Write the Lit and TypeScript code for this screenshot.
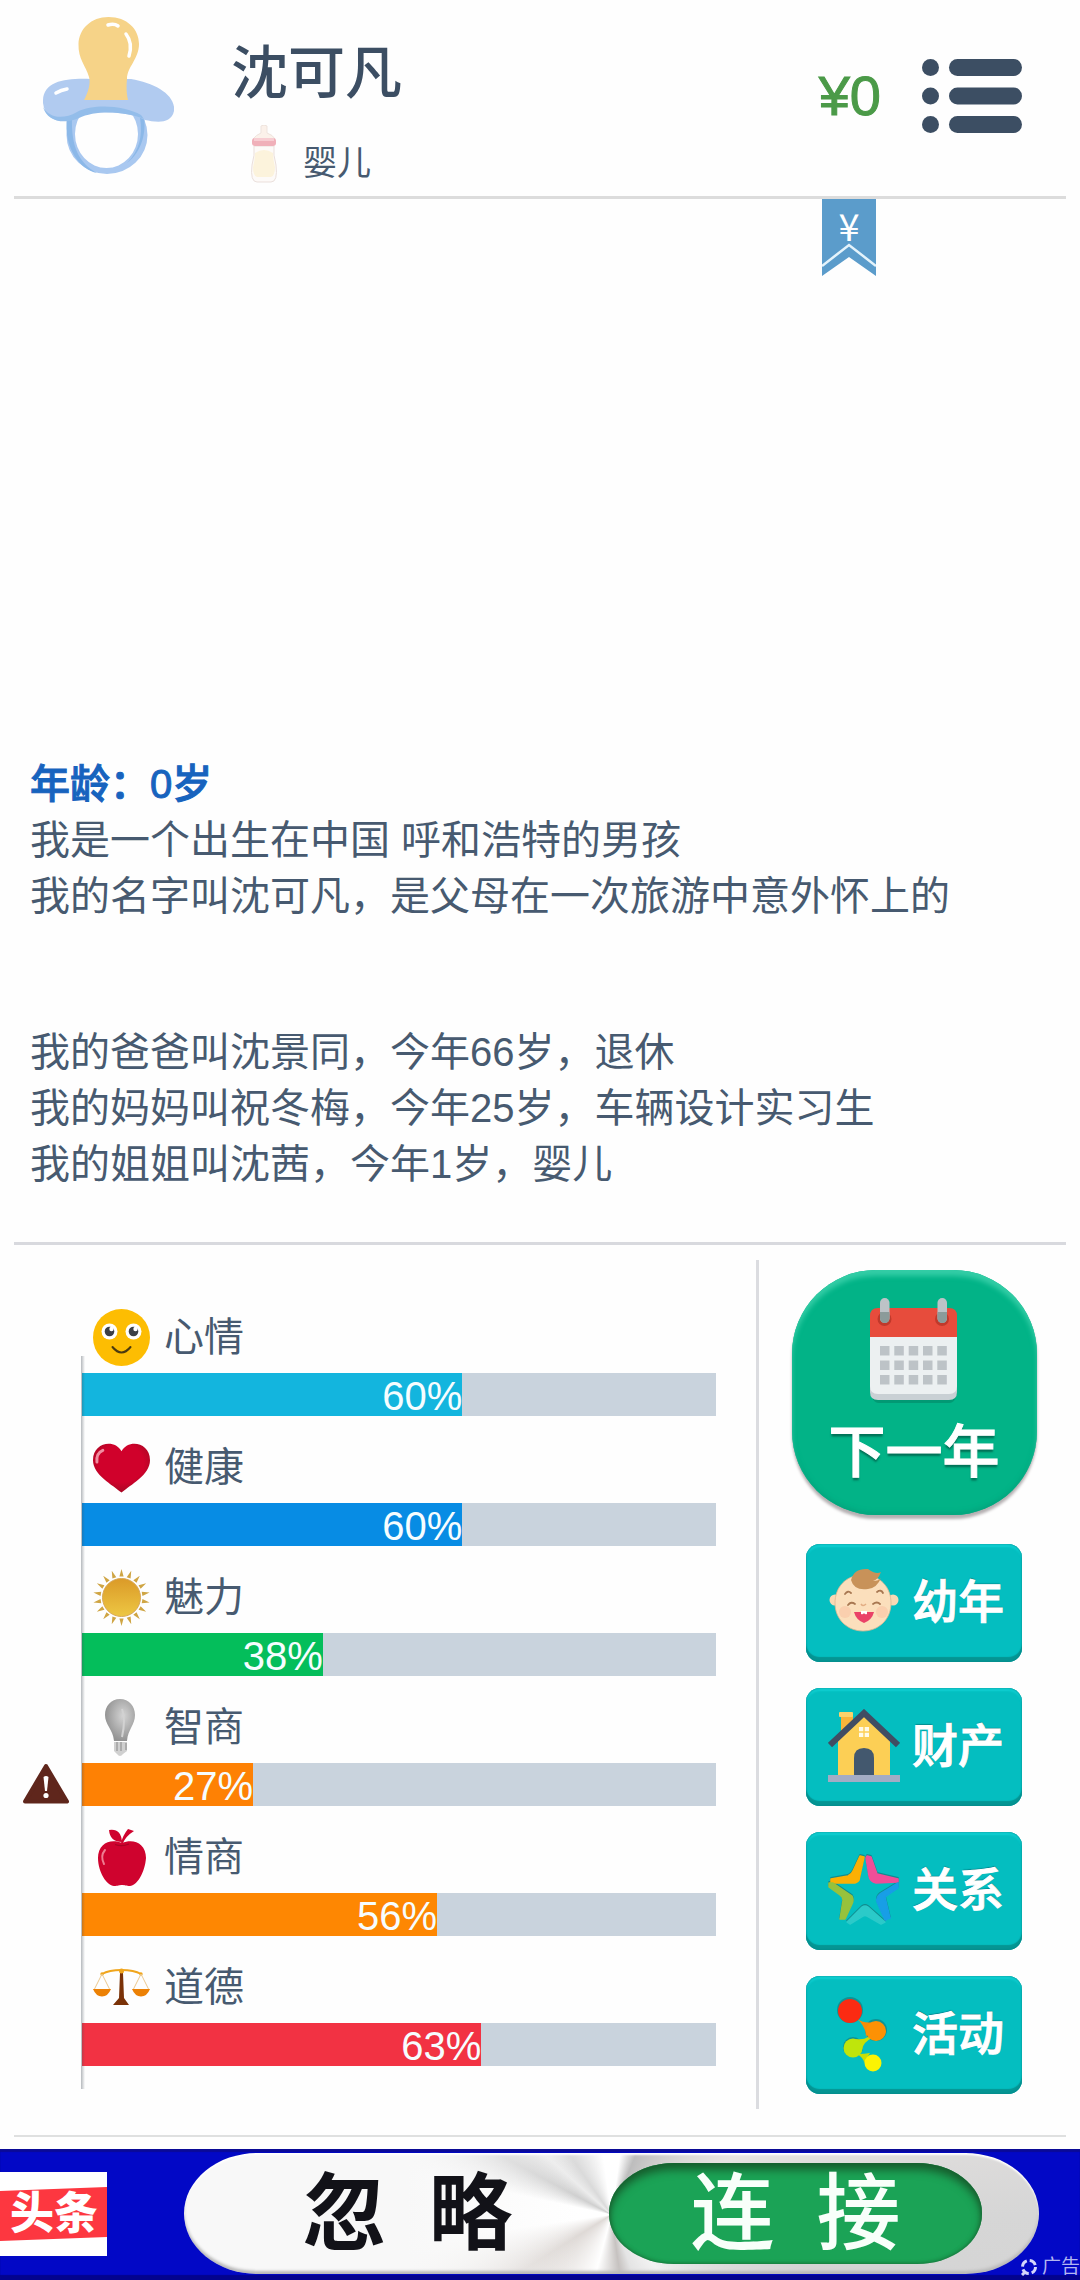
import { LitElement, html, svg, css, TemplateResult } from "lit";
import { customElement, property } from "lit/decorators.js";
import { styleMap } from "lit/directives/style-map.js";

/* ---------- icons ---------- */

const pacifier = html`<svg width="131" height="158" viewBox="0 0 131 158" role="img" aria-label="头像">
  <path fill="#a9c8f0" fill-rule="evenodd" d="M23.500 118A40.500 39 0 0 0 104.500 118A40.500 39 0 0 0 23.500 118ZM32 117A31.500 34 0 0 1 95 117A31.500 34 0 0 1 32 117Z"/>
  <path fill="#8bb8e8" d="M24 100C20 132 38 153 54 156C36 146 28 130 29 100ZM97 100C100 120 96 134 84 146C100 134 103 114 101 100Z"/>
  <path fill="#b1cbf0" d="M0 86C-1 64 22 61 48 62H88C112 66 133 78 131 94C128 108 112 105 102 103C86 94 48 92 34 101C18 108 2 103 0 86Z"/>
  <path fill="#93bdea" d="M0 90C4 104 20 108 36 101C52 93 82 94 101 102L98 98C82 89 52 86 34 95C20 103 6 101 0 90Z"/>
  <path fill="#f6d388" d="M65.500 0C84 0 96 12 96 27C96 42 84 50 84 62C83 72 84 78 85 83H41C45 76 48 66 46 60C43 49 35 42 35.500 27C36 12 48 0 65.500 0Z"/>
  <path fill="none" stroke="#fff" stroke-linecap="round" stroke-width="3.500" d="M65 8Q71 6 75 9M83 17Q90 26 86 39M13 76Q18 73 24 72"/>
</svg>`;

const bottle = html`<svg width="26" height="58" viewBox="0 0 26 58" aria-hidden="true">
  <path fill="#fbf1ea" stroke="#eee3dd" d="M10 1Q13-1 16 1V8Q22 10 24 14H2Q5 10 10 8Z"/>
  <path fill="#fdfaf8" stroke="#eadfdb" d="M3 21H23Q22 30 25 40Q27 57 20 57H6Q-1 57 1 40Q4 30 3 21Z"/>
  <path fill="#fcf3dc" d="M4 28Q13 22 22 28Q22 34 24 42Q24 51 20 52H6Q2 51 2 42Q4 34 4 28Z"/>
  <rect fill="#f0b0b9" x="1" y="13" width="24" height="8" rx="3"/>
  <path fill="#f7cdd2" d="M3 13H23V16H3Z"/>
</svg>`;

const menuIcon = html`<svg width="100" height="76" viewBox="0 0 100 76" aria-hidden="true" fill="#3c4e63">
  ${[9.5, 38, 66.5].map((y) => svg`<circle cx="8.5" cy=${y} r="8.5"/><rect x="27" y=${y - 8.5} width="73" height="17" rx="8.500"/>`)}
</svg>`;

const ribbon = html`<svg width="54" height="77" viewBox="0 0 54 77" aria-hidden="true">
  <path fill="#5b9ccb" d="M0 0H54V77L27 58L0 77Z"/>
  <path fill="none" stroke="#e4f3fb" stroke-width="2.500" d="M0 67L27 46L54 67"/>
</svg>`;

const smile = html`<svg width="57" height="57" viewBox="0 0 57 57" aria-hidden="true">
  <circle cx="28.500" cy="28.500" r="28.500" fill="#fdbd02"/>
  <circle cx="16.500" cy="22.500" r="8" fill="#fff"/><circle cx="40.500" cy="22.500" r="8" fill="#fff"/>
  <circle cx="16.500" cy="22.500" r="4.800" fill="#3b3f46"/><circle cx="40.500" cy="22.500" r="4.800" fill="#3b3f46"/>
  <circle cx="18.500" cy="20" r="2.200" fill="#fff"/><circle cx="42.500" cy="20" r="2.200" fill="#fff"/>
  <path d="M19.500 38Q28.500 49 37.500 38" fill="none" stroke="#4a3a10" stroke-width="2" stroke-linecap="round"/>
</svg>`;

const heart = html`<svg width="58" height="57" viewBox="0 0 58 57" aria-hidden="true">
  <defs><radialGradient id="h" cx=".5" cy=".4" r=".65"><stop offset=".6" stop-color="#d0012b"/><stop offset="1" stop-color="#9c0a22"/></radialGradient></defs>
  <path fill="url(#h)" d="M29 54C20 46 0 36 0 21C0 3 22-1 29 12C36-1 58 3 58 21C58 36 38 46 29 54Z"/>
  <path fill="none" stroke="#f08da0" stroke-width="3" stroke-linecap="round" d="M4 23Q3 14 10 11"/>
</svg>`;

const rays = Array.from({ length: 18 }, (_, i) => {
  const a = (i * Math.PI) / 9;
  const at = (r: number, d: number) => `${28.5 + r * Math.sin(a + d)} ${28.5 - r * Math.cos(a + d)}`;
  return `M${at(21, -0.1)}L${at(28.5, 0)}L${at(21, 0.1)}Z`;
}).join("");

const sun = html`<svg width="57" height="57" viewBox="0 0 57 57" aria-hidden="true">
  <defs><linearGradient id="s" x2="0" y2="1"><stop stop-color="#db9a28"/><stop offset="1" stop-color="#edc743"/></linearGradient></defs>
  <path d=${rays} fill="#cfa544"/>
  <circle cx="28.500" cy="28.500" r="19" fill="url(#s)" stroke="#d8a857"/>
</svg>`;

const bulb = html`<svg width="57" height="57" viewBox="0 0 57 57" aria-hidden="true">
  <defs><radialGradient id="b" cx=".6" cy=".4" r=".6"><stop stop-color="#d4d4d4"/><stop offset=".6" stop-color="#adadad"/><stop offset="1" stop-color="#939393"/></radialGradient></defs>
  <path fill="url(#b)" d="M27 0C36 0 42 7 42 16C42 26 35 30 34 42H21C20 30 12 26 12 16C12 7 18 0 27 0Z"/>
  <path fill="#d0d0d0" d="M21 43H34V52L30 55Q27 59 24 55L21 52Z"/>
  <path fill="none" stroke="#a0a0a0" stroke-width="1.500" d="M24 43V52M28 43V52M33 44V51"/>
  <path fill="none" stroke="#d2d2d2" stroke-width="2" d="M29 10Q33 20 29 38"/>
</svg>`;

const apple = html`<svg width="57" height="57" viewBox="0 0 57 57" aria-hidden="true">
  <path fill="#cf032e" d="M29 14C40 9 53 14 53 29C52 43 44 57 37 57C33 57 32 56 29 56C26 56 25 57 21 57C14 57 5 43 5 29C5 14 18 9 29 14Z"/>
  <path fill="#cf032e" d="M29 13Q17 13 16 1Q28-1 29 13ZM28 14Q30 6 35 0L41 2Q33 7 30 14Z"/>
  <path fill="none" stroke="#a80324" stroke-width="1.200" d="M22 15.500Q29 18 36 15"/>
  <path fill="none" stroke="#ee7d92" stroke-width="2" stroke-linecap="round" d="M11 35Q7 27 12 21"/>
</svg>`;

const scales = html`<svg width="57" height="57" viewBox="0 0 57 57" aria-hidden="true">
  <path fill="#7a3208" d="M27 14H30L31 39L36 46H20L26 39Z"/>
  <path fill="none" stroke="#f0a51c" stroke-width="2" stroke-linecap="round" d="M9 15Q16 11 28.500 11Q41 11 48 15"/>
  <circle cx="28.500" cy="12" r="2.500" fill="#f0a51c"/><circle cx="9" cy="15" r="1.700" fill="#f0a51c"/><circle cx="48" cy="15" r="1.700" fill="#f0a51c"/>
  <path fill="none" stroke="#ecc98e" d="M9 15L1 31M9 15L17 31M48 15L40 31M48 15L56 31"/>
  <path fill="#ec8105" d="M0 30H18Q15 37.500 9 37.500T0 30ZM39 30H57Q54 37.500 48 37.500T39 30Z"/>
</svg>`;

const warning = html`<svg width="46" height="42" viewBox="0 0 46 42" role="img" aria-label="警告">
  <path fill="#5f261c" stroke="#5f261c" stroke-width="4" stroke-linejoin="round" d="M23 3L44 38.500H2Z"/>
  <path fill="#fff" d="M20.500 14Q23 12 25.500 14L24 28H22Z"/><circle cx="23" cy="32.500" r="2.600" fill="#fff"/>
</svg>`;

const calendar = html`<svg width="88" height="106" viewBox="0 0 88 106" aria-hidden="true">
  <path fill="#017f61" opacity=".5" d="M1 90H87Q87 105 79 105H9Q1 105 1 90Z"/>
  <path fill="#c9d0d4" d="M0 50H87V94Q87 102 79 102H8Q0 102 0 94Z"/>
  <path fill="#ecf0f1" d="M0 38H87V88Q87 96 79 96H8Q0 96 0 88Z"/>
  <path fill="#e74c3c" d="M8 10H79Q87 10 87 18V39H0V18Q0 10 8 10Z"/>
  <circle cx="14.500" cy="21" r="7" fill="#c0392b"/><circle cx="72" cy="21" r="7" fill="#c0392b"/>
  <rect x="10" y="0" width="9.500" height="25" rx="4.700" fill="#bdc3c7"/><rect x="67.500" y="0" width="9.500" height="25" rx="4.700" fill="#bdc3c7"/>
  <path fill="#8b9b9a" d="M10 14H19.500V20Q19.500 25 14.750 25T10 20ZM67.500 14H77V20Q77 25 72.250 25T67.500 20Z"/>
  ${[48, 62.5, 77].map((y) => [10, 24.3, 38.7, 53, 67.3].map((x) => svg`<rect x=${x} y=${y} width="9.500" height="9.500" fill="#bdc3c7"/>`))}
</svg>`;

const baby = html`<svg width="72" height="72" viewBox="0 0 72 72" aria-hidden="true">
  <circle cx="7" cy="34" r="5.500" fill="#f9d9b4"/><circle cx="65" cy="34" r="5.500" fill="#f9d9b4"/>
  <path fill="#fbdfbc" stroke="#dcb690" stroke-width=".8" d="M35 9C53 9 63 22 63 37C63 54 50 65 35 65S7 54 7 37C7 22 17 9 35 9Z"/>
  <path fill="#c89259" d="M23 14Q26 2 40 3Q48 9 53 6Q50 14 45 15Q51 15 53 12Q49 22 40 23Q26 25 23 14Z"/>
  <path fill="none" stroke="#a87852" stroke-width="1.800" stroke-linecap="round" d="M17 28Q20 24 23 27M49 26Q53 23 55 27M20 39Q23 35 27 38M45 38Q49 35 52 38"/>
  <path fill="none" stroke="#e2ad84" stroke-width="1.500" d="M33 38Q35 41 38 38"/>
  <circle cx="17" cy="46" r="6" fill="#f9bfa0" opacity=".5"/><circle cx="54" cy="46" r="6" fill="#f9bfa0" opacity=".5"/>
  <path fill="#ea4268" d="M26 46H46Q44 54 36 57Q28 54 26 46Z"/><path fill="#fff" d="M33 45H39V48Q37 49 36 47Q35 49 33 48Z"/>
</svg>`;

const house = html`<svg width="72" height="74" viewBox="0 0 72 74" aria-hidden="true">
  <path fill="#f9b43a" d="M13 6H25V24L13 34Z"/><rect x="11" y="3" width="14" height="5" rx="1" fill="#fcd26b"/>
  <path fill="#fccf55" d="M36 4L62 31V67H10V31Z"/>
  <path fill="none" stroke="#404d63" stroke-width="6" stroke-linejoin="miter" d="M2 36L36 4L70 36"/>
  <path fill="#43586e" d="M26 67V49Q26 39 36 39T46 49V67Z"/>
  <path fill="#fffbe8" d="M31 18H35.300V22.300H31ZM36.700 18H41V22.300H36.700ZM31 23.700H35.300V28H31ZM36.700 23.700H41V28H36.700Z"/>
  <rect x="0" y="66" width="72" height="7" fill="#a3acc4"/>
</svg>`;

const starArms = [
  ["#fbb004", "M32 2L36 3L31 26Q29 29 25 29H3V25L20 22Q24 20 25 17Z"],
  ["#f04e98", "M39 2L43 3L49 20L70 25V28L48 29Q42 28 41 22L38 4Z"],
  ["#97c23c", "M1 29H5L24 42Q26 46 24 50L17 65H12L15 46Q15 43 12 41L1 33Z"],
  ["#189ee6", "M70 29V34L57 43L62 64L57 66L49 48Q48 43 52 40Z"],
  ["#2bcac9", "M19 68L34 53Q37 51 40 53L57 68L53 70L39 62Q37 61 35 62L22 70Z"],
];

const star = html`<svg width="72" height="72" viewBox="0 0 72 72" aria-hidden="true" stroke-linejoin="round" stroke-width="1.500">
  ${starArms.map(([, d]) => svg`<path d=${d} transform="translate(0 -1.2)" fill="#17777b" stroke="#17777b" opacity=".7"/>`)}
  ${starArms.map(([c, d]) => svg`<path d=${d} fill=${c} stroke=${c}/>`)}
</svg>`;

const chain = html`<svg width="72" height="76" viewBox="0 0 72 76" aria-hidden="true">
  <g fill="#16777a" opacity=".6"><circle cx="22" cy="14" r="13"/><circle cx="48" cy="34" r="11"/><circle cx="25" cy="51" r="10"/></g>
  <path fill="#fa8c06" d="M28 22Q36 28 45 26L38 41Q38 30 28 22Z"/>
  <path fill="#c8df06" d="M40 41Q36 44 28 43L34 54Q35 46 44 42ZM29 58Q37 58 42 57L36 67Q36 62 29 58Z"/>
  <circle cx="22" cy="15" r="12" fill="#fb2b12"/><circle cx="48" cy="35" r="10" fill="#fd9104"/>
  <circle cx="25" cy="52" r="9.500" fill="#bfe50b"/><circle cx="45" cy="67" r="8.500" fill="#fbf303"/>
</svg>`;

const adMark = html`<svg width="18" height="18" viewBox="0 0 18 18" aria-hidden="true" fill="none" stroke="#d4d6fb" stroke-width="3">
  <circle cx="9" cy="9" r="6.500" stroke-dasharray="7.200 3"/><path d="M2 17L5 14"/>
</svg>`;

/* ---------- data ---------- */

interface Stat {
  name: string;
  value: number;
  color: string;
  icon: TemplateResult;
  alert?: boolean;
}

const stats: Stat[] = [
  { name: "心情", value: 60, color: "#13b5de", icon: smile },
  { name: "健康", value: 60, color: "#078ce4", icon: heart },
  { name: "魅力", value: 38, color: "#04be5b", icon: sun },
  { name: "智商", value: 27, color: "#fe8104", icon: bulb, alert: true },
  { name: "情商", value: 56, color: "#fe8702", icon: apple },
  { name: "道德", value: 63, color: "#f23243", icon: scales },
];

const actions = [
  { label: "幼年", icon: baby },
  { label: "财产", icon: house },
  { label: "关系", icon: star },
  { label: "活动", icon: chain },
];

const story = [
  ["我是一个出生在中国 呼和浩特的男孩", "我的名字叫沈可凡，是父母在一次旅游中意外怀上的"],
  ["我的爸爸叫沈景同，今年66岁，退休", "我的妈妈叫祝冬梅，今年25岁，车辆设计实习生", "我的姐姐叫沈茜，今年1岁，婴儿"],
];

/* ---------- elements ---------- */

@customElement("stat-bar")
export class StatBar extends LitElement {
  @property({ attribute: false }) stat!: Stat;

  static styles = css`
    :host { display: grid; grid-template-columns: 68px 1fr; row-gap: 6px; }
    .label { grid-column: 2; display: flex; align-items: center; gap: 14px; height: 60px; padding-left: 11px; font-size: 40px; line-height: 60px; color: #475a70; }
    .label svg { width: 57px; flex: none; }
    .alert { padding-left: 9px; height: 43px; }
    .track { grid-column: 2; height: 43px; background: #c9d3dd; }
    .fill { height: 100%; text-align: right; color: #f6fdff; font-size: 40px; line-height: 46px; }
  `;

  render() {
    const { name, value, color, icon, alert } = this.stat;
    return html`
      <div class="label">${icon}<span id="name">${name}</span></div>
      ${alert ? html`<div class="alert">${warning}</div>` : null}
      <div class="track" role="progressbar" aria-labelledby="name" aria-valuenow=${value}>
        <div class="fill" style=${styleMap({ width: `${value}%`, background: color })}>${value}%</div>
      </div>
    `;
  }
}

@customElement("app-root")
export class AppRoot extends LitElement {
  static styles = css`
    :host {
      display: flex; flex-direction: column; min-height: 100vh; background: #fefefe; color: #475a70;
      font-family: "Liberation Sans", "Noto Sans CJK SC", sans-serif;
    }
    * { box-sizing: border-box; }
    h1, h2, p { margin: 0; }
    svg { display: block; }
    button { border: 0; padding: 0; background: none; font-family: inherit; cursor: pointer; }

    .header { display: flex; align-items: center; margin: 0 14px; padding: 0 44px 4px 29px; height: 199px; border-bottom: 3px solid #dcdcdc; }
    .who { align-self: flex-start; flex: 1; padding: 41px 0 0 57px; }
    .name { font-size: 57px; line-height: 64px; font-weight: 500; color: #3c4e63; }
    .stage { display: flex; align-items: flex-end; gap: 26px; padding: 20px 0 0 20px; font-size: 34px; line-height: 40px; }
    .money { font-size: 56px; line-height: 64px; color: #4b9a48; -webkit-text-stroke: 1px #4b9a48; margin-right: 41px; }

    .log { flex: 1; display: flex; flex-direction: column; padding: 0 30px 50px; font-size: 40px; line-height: 56px; }
    .ribbon { align-self: flex-end; display: grid; margin-right: 174px; }
    .ribbon > * { grid-area: 1 / 1; }
    .currency { text-align: center; color: #fff; font-family: "Noto Sans CJK SC", sans-serif; font-size: 38px; line-height: 52px; }
    .entries { margin-top: auto; }
    .age { font-size: 40px; line-height: 56px; font-weight: 500; color: #1763be; -webkit-text-stroke: 1px #1763be; }
    .block + .block { margin-top: 100px; }

    .panel { display: flex; margin: 0 14px; padding: 15px 0 26px; border-top: 3px solid #d8d9de; border-bottom: 2px solid #dfe0e0; }
    .stats { position: relative; flex: 1; display: flex; flex-direction: column; gap: 21px; padding: 47px 40px 43px 0; }
    .stats::after { content: ""; position: absolute; left: 67px; top: 96px; bottom: 20px; width: 4px; background: linear-gradient(90deg, rgba(70, 80, 90, 0.4), rgba(70, 80, 90, 0)); }
    .actions { display: flex; flex-direction: column; align-items: center; gap: 26px; width: 310px; padding: 10px 0 15px 3px; border-left: 3px solid #dbdce0; }

    .next {
      display: flex; flex-direction: column; align-items: center; width: 245px; height: 245px; padding-top: 28px; margin-bottom: 3px;
      border-radius: 84px; background: #02b387; color: #fff; font-size: 57px; line-height: 64px; font-weight: 500; gap: 16px;
      -webkit-text-stroke: 1px #fff; text-shadow: 0 3px 2px rgba(0, 70, 55, 0.6);
      box-shadow: inset 0 6px 5px #33cda6, inset 0 -3px 4px #04a67e, 0 4px 3px #b5b0b2;
    }
    .action {
      display: flex; align-items: center; gap: 12px; width: 216px; height: 118px; padding: 0 0 2px 22px; border-radius: 14px;
      background: #04bec0; color: #fff; font-size: 46px; line-height: 56px; font-weight: 500; text-shadow: 0 -1px 1px #04696d;
      -webkit-text-stroke: 1px #fff;
      box-shadow: inset 0 0 2px #047f83, inset 0 -5px 1px #059593, inset 0 3px 2px #0fd0d2;
    }
    .action svg { flex: none; }

    .banner { position: relative; display: flex; height: 131px; margin-top: 12px; padding: 4px 41px 6px 0; background: #0208c6; box-shadow: inset 0 3px 1px #0a0a96, inset 0 -5px 1px #03038e; }
    .brand { display: flex; align-items: center; width: 107px; height: 84px; margin: 19px 77px 0 0; background: #fff; }
    .brand-text {
      flex: 1; height: 54px; padding-left: 10px; background: #fd3740; clip-path: polygon(0 4px, 100% 0, 100% 50px, 0 100%);
      color: #fff; font-size: 44px; line-height: 54px; font-weight: 900; text-decoration: none;
    }
    .pill {
      flex: 1; display: grid; grid-template-columns: 425fr 373fr 57px; align-items: center; border-radius: 74px / 61px;
      box-shadow: inset 0 2px 2px #fff, inset 0 -3px 3px #b9b9b9;
      background:
        linear-gradient(90deg, #f8f8f8 26%, rgba(248, 248, 248, 0) 46%),
        conic-gradient(from 0deg at 50% 51%, #fff 0deg, #fff 8deg, #bdbdbd 22deg, #e8e4e2 65deg, #d6d6d6 90deg, #d4d4d4 105deg, #f2f2f2 140deg, #e4e4e4 160deg, #c6c2c0 172deg, #fff 195deg, #ded9d6 238deg, #fff 262deg, #fff 282deg, #cfcfcf 298deg, #ececec 312deg, #dadada 325deg, #fff 352deg);
    }
    .ignore, .connect { font-size: 84px; line-height: 100px; white-space: nowrap; }
    .ignore { padding-left: 22px; color: #121218; font-weight: 700; }
    .connect { height: 101px; border-radius: 65px / 50px; color: #f8fffa; font-weight: 500; background: #1ba356; box-shadow: inset 0 7px 9px #17602f, inset 0 0 4px #17602f; }
    .ad { position: absolute; right: 0; bottom: 3px; display: flex; align-items: center; gap: 4px; font-size: 19px; line-height: 20px; color: #b3b6f0; }
  `;

  render() {
    return html`
      <header class="header">
        ${pacifier}
        <div class="who">
          <h1 class="name">沈可凡</h1>
          <div class="stage">${bottle}<span>婴儿</span></div>
        </div>
        <div class="money">¥0</div>
        <button aria-label="菜单">${menuIcon}</button>
      </header>

      <main class="log">
        <div class="ribbon">${ribbon}<span class="currency">¥</span></div>
        <div class="entries">
          <h2 class="age">年龄：0岁</h2>
          ${story.map((block) => html`<div class="block">${block.map((line) => html`<p>${line}</p>`)}</div>`)}
        </div>
      </main>

      <section class="panel">
        <div class="stats">${stats.map((s) => html`<stat-bar .stat=${s}></stat-bar>`)}</div>
        <nav class="actions">
          <button class="next">${calendar}<span>下一年</span></button>
          ${actions.map((a) => html`<button class="action">${a.icon}<span>${a.label}</span></button>`)}
        </nav>
      </section>

      <aside class="banner">
        <div class="brand"><a class="brand-text" href="#">头条</a></div>
        <div class="pill">
          <button class="ignore">忽&ensp;略</button>
          <button class="connect">连&ensp;接</button>
        </div>
        <div class="ad">${adMark}<span>广告</span></div>
      </aside>
    `;
  }
}
